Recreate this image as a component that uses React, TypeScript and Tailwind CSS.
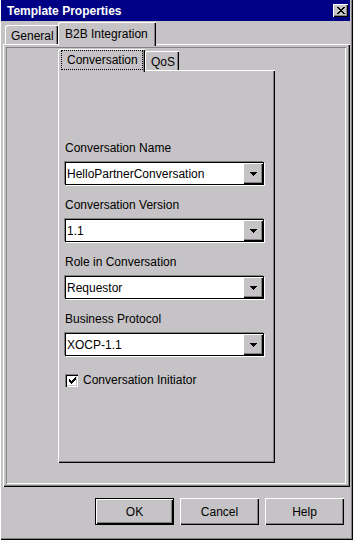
import React from "react";

// Win9x-style bevels
const raised =
  "shadow-[inset_1px_1px_0_#fff,inset_-1px_-1px_0_#000,inset_-2px_-2px_0_#848284]";

function Combo({ value }: { value: string }) {
  return (
    <div className="mt-[7px] flex h-[23px] w-[199px] border border-black bg-white shadow-[-1px_-1px_0_#848284,1px_1px_0_#fff]">
      <div className="flex flex-1 items-center pl-[1px]">{value}</div>
      <div className="flex w-[20px] items-center justify-center bg-[#c6c3c6] shadow-[inset_1px_1px_0_#fff,inset_-1px_-1px_0_#000,inset_-2px_-2px_0_#848284]">
        <svg width="7" height="4" viewBox="0 0 7 4" shapeRendering="crispEdges">
          <rect x="0" y="0" width="7" height="1" fill="#000" />
          <rect x="1" y="1" width="5" height="1" fill="#000" />
          <rect x="2" y="2" width="3" height="1" fill="#000" />
          <rect x="3" y="3" width="1" height="1" fill="#000" />
        </svg>
      </div>
    </div>
  );
}

function Field({ label, value, first }: { label: string; value: string; first?: boolean }) {
  return (
    <div className={first ? "" : "mt-[13px]"}>
      <div className="h-[14px]">{label}</div>
      <Combo value={value} />
    </div>
  );
}

export default function App() {
  return (
    <div className="flex h-[540px] w-[353px] flex-col bg-[#c6c3c6] pb-[3px] pl-[1px] pr-[3px] font-['Liberation_Sans',Arial,sans-serif] text-[12px] leading-[14px] text-black shadow-[inset_1px_0_0_#fff,inset_-1px_-1px_0_#000,inset_-2px_-2px_0_#848284]">
      {/* title bar */}
      <div className="flex h-[21px] items-center justify-between bg-[#000084] pl-[6px] pr-[2px]">
        <span className="text-[12px] font-bold text-white">Template Properties</span>
        <div className={`flex h-[13px] w-[15px] items-center justify-center bg-[#c6c3c6] ${raised}`}>
          <svg width="8" height="7" viewBox="0 0 8 7" shapeRendering="crispEdges">
            <rect x="0" y="0" width="2" height="1" fill="#000" />
            <rect x="6" y="0" width="2" height="1" fill="#000" />
            <rect x="1" y="1" width="2" height="1" fill="#000" />
            <rect x="5" y="1" width="2" height="1" fill="#000" />
            <rect x="2" y="2" width="4" height="1" fill="#000" />
            <rect x="3" y="3" width="2" height="1" fill="#000" />
            <rect x="2" y="4" width="4" height="1" fill="#000" />
            <rect x="1" y="5" width="2" height="1" fill="#000" />
            <rect x="5" y="5" width="2" height="1" fill="#000" />
            <rect x="0" y="6" width="2" height="1" fill="#000" />
            <rect x="6" y="6" width="2" height="1" fill="#000" />
          </svg>
        </div>
      </div>

      {/* outer tabs */}
      <div className="relative z-10 flex h-[23px] items-start">
        <div className="ml-[4px] mt-[4px] h-[19px] w-[53px] rounded-tl-[2px] pl-[6px] pt-[4px] shadow-[inset_1px_1px_0_#fff,inset_-1px_0_0_#000,inset_-2px_0_0_#848284]">
          General
        </div>
        <div className="mt-[1px] h-[24px] w-[98px] rounded-tl-[2px] bg-[#c6c3c6] pl-[7px] pt-[5px] shadow-[inset_1px_1px_0_#fff,inset_-1px_0_0_#000,inset_-2px_0_0_#848284]">
          B2B Integration
        </div>
      </div>

      {/* outer tab page */}
      <div className={`ml-[2px] h-[443px] w-[347px] pb-[3px] pl-[3px] pr-[4px] pt-[3px] ${raised}`}>
        <div className="h-full w-full pt-[2px] shadow-[inset_1px_1px_0_#848284,inset_-1px_-1px_0_#fff]">
          <div className="ml-[52px] w-[217px]">
            {/* inner tabs */}
            <div className="relative z-10 flex h-[21px] items-start">
              <div className="h-[23px] w-[87px] rounded-tl-[2px] bg-[#c6c3c6] pl-[3px] pt-[1px] shadow-[inset_1px_1px_0_#fff,inset_-1px_0_0_#000,inset_-2px_0_0_#848284]">
                <div className="h-[20px] w-[82px] border border-dotted border-black pl-[5px] pt-[2px]">
                  Conversation
                </div>
              </div>
              <div className="mt-[2px] h-[19px] w-[34px] rounded-tl-[2px] pl-[6px] pt-[4px] shadow-[inset_1px_1px_0_#fff,inset_-1px_0_0_#000,inset_-2px_0_0_#848284]">
                QoS
              </div>
            </div>

            {/* inner tab page */}
            <div className={`h-[393px] pl-[7px] pt-[71px] ${raised}`}>
              <Field first label="Conversation Name" value="HelloPartnerConversation" />
              <Field label="Conversation Version" value="1.1" />
              <Field label="Role in Conversation" value="Requestor" />
              <Field label="Business Protocol" value="XOCP-1.1" />

              <div className="mt-[17px] flex items-center">
                <div className="flex h-[13px] w-[13px] items-center justify-center bg-white shadow-[inset_1px_1px_0_#848284,inset_2px_2px_0_#000,inset_-1px_-1px_0_#fff,inset_-2px_-2px_0_#c6c3c6]">
                  <svg width="7" height="7" viewBox="0 0 7 7" shapeRendering="crispEdges" className="ml-[1px] mt-[1px]">
                    <rect x="6" y="0" width="1" height="1" fill="#000" />
                    <rect x="5" y="1" width="2" height="1" fill="#000" />
                    <rect x="0" y="2" width="1" height="1" fill="#000" />
                    <rect x="4" y="2" width="3" height="1" fill="#000" />
                    <rect x="0" y="3" width="2" height="1" fill="#000" />
                    <rect x="3" y="3" width="3" height="1" fill="#000" />
                    <rect x="0" y="4" width="5" height="1" fill="#000" />
                    <rect x="1" y="5" width="3" height="1" fill="#000" />
                    <rect x="2" y="6" width="1" height="1" fill="#000" />
                  </svg>
                </div>
                <span className="ml-[5px]">Conversation Initiator</span>
              </div>
            </div>
          </div>
        </div>
      </div>

      {/* dialog buttons */}
      <div className="mt-[11px] flex justify-end gap-[6px] pr-[6px]">
        <button className={`flex h-[27px] w-[79px] items-center justify-center border border-black bg-[#c6c3c6] ${raised}`}>
          OK
        </button>
        <button className={`flex h-[27px] w-[79px] items-center justify-center bg-[#c6c3c6] ${raised}`}>
          Cancel
        </button>
        <button className={`flex h-[27px] w-[79px] items-center justify-center bg-[#c6c3c6] ${raised}`}>
          Help
        </button>
      </div>
    </div>
  );
}
